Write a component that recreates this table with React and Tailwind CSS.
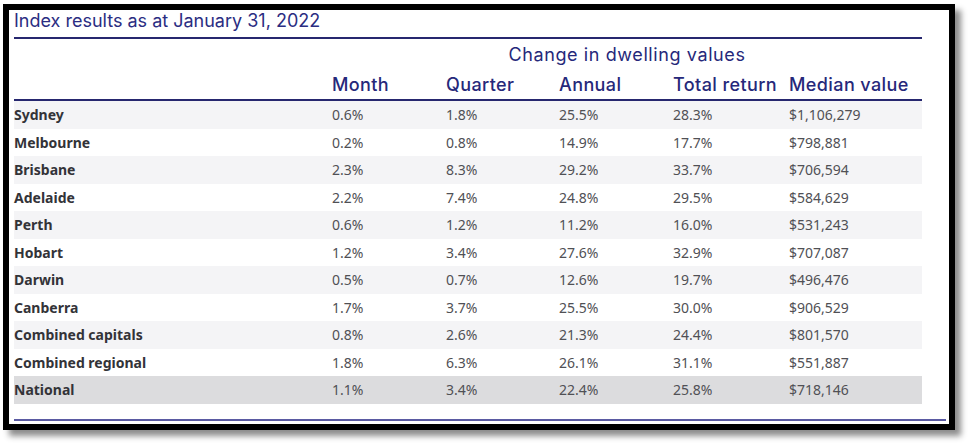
const rows = [
  ['Sydney', '0.6%', '1.8%', '25.5%', '28.3%', '$1,106,279'],
  ['Melbourne', '0.2%', '0.8%', '14.9%', '17.7%', '$798,881'],
  ['Brisbane', '2.3%', '8.3%', '29.2%', '33.7%', '$706,594'],
  ['Adelaide', '2.2%', '7.4%', '24.8%', '29.5%', '$584,629'],
  ['Perth', '0.6%', '1.2%', '11.2%', '16.0%', '$531,243'],
  ['Hobart', '1.2%', '3.4%', '27.6%', '32.9%', '$707,087'],
  ['Darwin', '0.5%', '0.7%', '12.6%', '19.7%', '$496,476'],
  ['Canberra', '1.7%', '3.7%', '25.5%', '30.0%', '$906,529'],
  ['Combined capitals', '0.8%', '2.6%', '21.3%', '24.4%', '$801,570'],
  ['Combined regional', '1.8%', '6.3%', '26.1%', '31.1%', '$551,887'],
  ['National', '1.1%', '3.4%', '22.4%', '25.8%', '$718,146'],
];

const heads = ['Month', 'Quarter', 'Annual', 'Total return', 'Median value'];

export default function App() {
  return (
    <div className="w-[969px] h-[444px] bg-white pt-[4px] pl-[3px]">
      <div className="w-[952px] h-[426px] border-[6px] border-black bg-white shadow-[6px_6px_6px_rgba(0,0,0,0.45)] pl-[5px]">
        <div className="w-[908px]">
          <div className="h-[29px] border-b-2 border-[#26276f] font-['Inter',sans-serif] text-[18px] leading-[22px] text-[#2b2d82]">
            Index results as at January 31, 2022
          </div>
          <div className="h-[62px] border-b-2 border-[#26276f] font-['Inter',sans-serif] text-[#26287a]">
            <div className="ml-[318px] h-[32px] pt-[3px] text-center text-[18px] leading-[26px] tracking-[0.6px]">Change in dwelling values</div>
            <div className="grid grid-cols-[318px_114px_113px_114px_116px_1fr] h-[28px] text-[18px] leading-[28px] font-medium tracking-[0.4px]">
              <div></div>
              {heads.map(h => (
                <div key={h} className="whitespace-nowrap">{h}</div>
              ))}
            </div>
          </div>
          <div className="font-['Noto_Sans',sans-serif] text-[14px]">
            {rows.map((r, i) => (
              <div
                key={r[0]}
                className={`grid grid-cols-[318px_114px_113px_114px_116px_1fr] h-[27.5px] items-center ${i === 10 ? 'bg-[#dcdcde]' : i % 2 === 0 ? 'bg-[#f4f4f6]' : 'bg-white'}`}
              >
                <div className="font-bold text-[#333338]">{r[0]}</div>
                {r.slice(1).map((v, j) => (
                  <div key={j} className="text-[#505055]">{v}</div>
                ))}
              </div>
            ))}
          </div>
        </div>
        <div className="mt-[15px] w-[932px] h-[2px] bg-[#5a5aa2]"></div>
      </div>
    </div>
  );
}
